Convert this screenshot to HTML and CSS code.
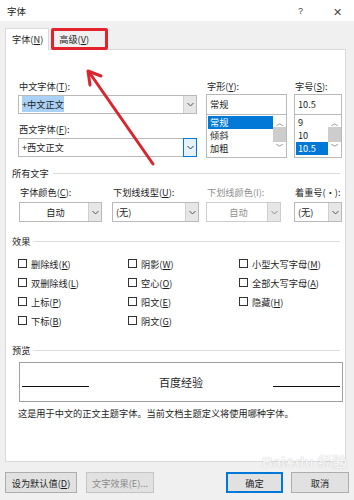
FILE: index.html
```html
<!DOCTYPE html>
<html lang="zh">
<head>
  <meta charset="UTF-8" />
  <title>字体</title>
  <link rel="stylesheet" href="styles.css">
</head>
<body>

  <div class="titlebar">
    <span class="title">字体</span>
    <span class="help">?</span>
    <span class="close">✕</span>
  </div>

  <div class="tabs">
    <div class="tab active">字体(<u>N</u>)</div>
    <div class="tab marked">高级(<u>V</u>)</div>
  </div>

  <div class="panel">
    <div class="fonts">
      <div class="col col-face">
        <div class="label">中文字体(<u>T</u>):</div>
        <div class="select">
          <span class="value"><span class="hl">+中文正文</span></span>
          <span class="drop"><svg width="7" height="5" viewBox="0 0 7 5"><polyline points="0.5,1 3.5,4 6.5,1" fill="none" stroke="#555" stroke-width="1"/></svg></span>
        </div>
        <div class="label gap">西文字体(<u>F</u>):</div>
        <div class="select">
          <span class="value">+西文正文</span>
          <span class="drop focus"><svg width="7" height="5" viewBox="0 0 7 5"><polyline points="0.5,1 3.5,4 6.5,1" fill="none" stroke="#333" stroke-width="1"/></svg></span>
        </div>
      </div>

      <div class="col col-style">
        <div class="label">字形(<u>Y</u>):</div>
        <div class="input">常规</div>
        <div class="list">
          <div class="items">
            <div class="item sel">常规</div>
            <div class="item">倾斜</div>
            <div class="item">加粗</div>
          </div>
          <div class="scroll">
            <span class="arr">︿</span>
            <span class="thumb"></span>
            <span class="arr">﹀</span>
          </div>
        </div>
      </div>

      <div class="col col-size">
        <div class="label">字号(<u>S</u>):</div>
        <div class="input">10.5</div>
        <div class="list">
          <div class="items">
            <div class="item">9</div>
            <div class="item">10</div>
            <div class="item sel">10.5</div>
          </div>
          <div class="scroll">
            <span class="arr">︿</span>
            <span class="thumb"></span>
            <span class="arr">﹀</span>
          </div>
        </div>
      </div>
    </div>

    <div class="heading"><span>所有文字</span></div>

    <div class="attrs">
      <div class="attr a-color">
        <div class="label">字体颜色(<u>C</u>):</div>
        <div class="select">
          <span class="value center">自动</span>
          <span class="drop"><svg width="7" height="5" viewBox="0 0 7 5"><polyline points="0.5,1 3.5,4 6.5,1" fill="none" stroke="#555" stroke-width="1"/></svg></span>
        </div>
      </div>
      <div class="attr a-line">
        <div class="label">下划线线型(<u>U</u>):</div>
        <div class="select">
          <span class="value">(无)</span>
          <span class="drop"><svg width="7" height="5" viewBox="0 0 7 5"><polyline points="0.5,1 3.5,4 6.5,1" fill="none" stroke="#555" stroke-width="1"/></svg></span>
        </div>
      </div>
      <div class="attr a-lcolor disabled">
        <div class="label">下划线颜色(I):</div>
        <div class="select">
          <span class="value center">自动</span>
          <span class="drop"><svg width="7" height="5" viewBox="0 0 7 5"><polyline points="0.5,1 3.5,4 6.5,1" fill="none" stroke="#888" stroke-width="1"/></svg></span>
        </div>
      </div>
      <div class="attr a-dot">
        <div class="label">着重号(·):</div>
        <div class="select">
          <span class="value">(无)</span>
          <span class="drop"><svg width="7" height="5" viewBox="0 0 7 5"><polyline points="0.5,1 3.5,4 6.5,1" fill="none" stroke="#555" stroke-width="1"/></svg></span>
        </div>
      </div>
    </div>

    <div class="heading h-effects"><span>效果</span></div>

    <div class="effects">
      <label class="check"><span class="box"></span>删除线(<u>K</u>)</label>
      <label class="check"><span class="box"></span>阴影(<u>W</u>)</label>
      <label class="check"><span class="box"></span>小型大写字母(<u>M</u>)</label>
      <label class="check"><span class="box"></span>双删除线(<u>L</u>)</label>
      <label class="check"><span class="box"></span>空心(<u>O</u>)</label>
      <label class="check"><span class="box"></span>全部大写字母(<u>A</u>)</label>
      <label class="check"><span class="box"></span>上标(<u>P</u>)</label>
      <label class="check"><span class="box"></span>阳文(<u>E</u>)</label>
      <label class="check"><span class="box"></span>隐藏(<u>H</u>)</label>
      <label class="check"><span class="box"></span>下标(<u>B</u>)</label>
      <label class="check"><span class="box"></span>阴文(<u>G</u>)</label>
    </div>

    <div class="heading h-preview"><span>预览</span></div>

    <div class="preview">
      <span class="rule"></span>
      <span class="sample">百度经验</span>
      <span class="rule"></span>
    </div>
    <p class="note">这是用于中文的正文主题字体。当前文档主题定义将使用哪种字体。</p>
  </div>

  <div class="buttons">
    <button class="b-default">设为默认值(<u>D</u>)</button>
    <button class="b-effects" disabled>文字效果(E)...</button>
    <span class="spacer"></span>
    <button class="b-ok">确定</button>
    <button class="b-cancel">取消</button>
  </div>

  <div class="watermark">Bai<span class="paw">❀</span>du 经验</div>

  <!-- annotation arrow -->
  <svg class="arrow" width="354" height="500" viewBox="0 0 354 500">
    <line x1="153" y1="164" x2="89" y2="72" stroke="#d9252d" stroke-width="3" stroke-linecap="round"/>
    <polyline points="90,85 88,71 101,76" fill="none" stroke="#d9252d" stroke-width="3" stroke-linecap="round" stroke-linejoin="round"/>
  </svg>

</body>
</html>
```

FILE: styles.css
```css
body {
  margin: 0;
  width: 354px;
  height: 500px;
  overflow: hidden;
  position: relative;
  background: #f0f0f0;
  color: #1e1e1e;
  font-family: "Noto Sans CJK SC", "Microsoft YaHei", sans-serif;
  font-size: 9.2px;
  line-height: 12px;
}
u {
  text-decoration: underline;
  text-underline-offset: 1px;
}
.titlebar {
  height: 21px;
  background: #fff;
  display: flex;
  align-items: center;
  padding: 0 12px 0 7px;
}
.title {
  flex: 1;
  font-size: 9.5px;
}
.help {
  font-family: "Liberation Sans", sans-serif;
  font-size: 9px;
  color: #444;
  margin-right: 30px;
}
.close {
  font-size: 11px;
  color: #444;
}
.tabs {
  height: 28px;
  display: flex;
  align-items: flex-end;
  padding-left: 5px;
}
.tab {
  height: 21px;
  line-height: 21px;
  box-sizing: border-box;
}
.tab.active {
  background: #fff;
  border: 1px solid #d9d9d9;
  border-bottom: none;
  height: 22px;
  margin-bottom: -1px;
  padding: 0 5px 0 6px;
  position: relative;
  z-index: 1;
}
.tab.marked {
  width: 57px;
  height: 22px;
  line-height: 16px;
  margin-left: 2px;
  margin-bottom: -1px;
  padding-left: 5px;
  border: 3px solid #e3222c;
  border-radius: 2px;
  background: #f0f0f0;
  position: relative;
  z-index: 2;
}
.panel {
  margin-left: 5px;
  width: 341px;
  height: 413px;
  box-sizing: border-box;
  background: #fff;
  border: 1px solid #d9d9d9;
}

/* font face row */
.fonts {
  display: flex;
  padding: 30px 0 0 12px;
}
.label {
  height: 12px;
  padding-left: 1px;
  white-space: nowrap;
}
.label.gap {
  margin-top: 9px;
}
.col-face {
  width: 179px;
  margin-right: 9px;
}
.col-style {
  width: 81px;
  margin-right: 7px;
}
.col-size {
  width: 48px;
}
.select {
  display: flex;
  height: 19px;
  margin-top: 3px;
  box-sizing: border-box;
  border: 1px solid #b9b9b9;
  background: #fff;
}
.select .value {
  flex: 1;
  padding-left: 3px;
  line-height: 17px;
  white-space: nowrap;
}
.select .value.center {
  text-align: center;
}
.hl {
  background: #a9d1f5;
  padding: 1px 0;
}
.drop {
  width: 12px;
  display: flex;
  align-items: center;
  justify-content: center;
  background: #e6e6e6;
  border-left: 1px solid #cfcfcf;
}
.drop.focus {
  background: #e5f1fb;
  border: 1px solid #0078d7;
  margin: -1px -1px -1px 0;
}
.input {
  height: 21px;
  margin-top: 2px;
  box-sizing: border-box;
  border: 1px solid #b9b9b9;
  padding-left: 3px;
  line-height: 19px;
}
.list {
  display: flex;
  height: 43px;
  box-sizing: border-box;
  border: 1px solid #b9b9b9;
  border-top: none;
}
.items {
  flex: 1;
  padding: 1px 0 0 1px;
}
.item {
  height: 13px;
  line-height: 13px;
  padding-left: 2px;
}
.item.sel {
  background: #0078d7;
  color: #fff;
}
.scroll {
  width: 13px;
  display: flex;
  flex-direction: column;
  align-items: center;
  font-size: 7px;
  line-height: 8px;
  color: #555;
  padding-top: 3px;
}
.thumb {
  width: 13px;
  height: 15px;
  margin: 1px 0;
  background: #cdcdcd;
}

/* section headings */
.heading {
  display: flex;
  align-items: center;
  margin: 9px 5px 0 6px;
  height: 12px;
}
.heading::after {
  content: "";
  flex: 1;
  height: 1px;
  background: #dcdcdc;
  margin-left: 4px;
}
.h-effects {
  margin-top: 13px;
}
.h-preview {
  margin-top: 14px;
}

/* all text row */
.attrs {
  display: flex;
  padding: 7px 0 0 13px;
}
.attrs .select {
  height: 20px;
  margin-top: 4px;
}
.attrs .select .value {
  line-height: 18px;
}
.a-color {
  width: 83px;
  margin-right: 10px;
}
.a-line {
  width: 87px;
  margin-right: 7px;
}
.a-lcolor {
  width: 75px;
  margin-right: 13px;
}
.a-dot {
  width: 48px;
}
.disabled .label,
.disabled .value {
  color: #8f8f8f;
}
.disabled .select {
  border-color: #cccccc;
}

/* effects */
.effects {
  display: grid;
  grid-template-columns: 110px 111px 100px;
  grid-auto-rows: 19px;
  padding: 7px 0 0 12px;
}
.check {
  display: flex;
  align-items: center;
  white-space: nowrap;
}
.box {
  width: 9px;
  height: 9px;
  box-sizing: border-box;
  border: 1px solid #333;
  margin-right: 4px;
}

/* preview */
.preview {
  display: flex;
  align-items: center;
  margin: 6px 0 0 13px;
  width: 324px;
  height: 40px;
  box-sizing: border-box;
  border: 1px solid #a0a0a0;
  padding: 0 2px;
}
.rule {
  width: 67px;
  height: 1px;
  background: #111;
  margin-top: 8px;
}
.sample {
  flex: 1;
  text-align: center;
  font-size: 11px;
}
.note {
  margin: 5px 0 0 12px;
  white-space: nowrap;
}

/* bottom buttons */
.buttons {
  display: flex;
  padding: 10px 5px 0 5px;
}
button {
  height: 21px;
  box-sizing: border-box;
  border: 1px solid #adadad;
  background: #e1e1e1;
  font-family: inherit;
  font-size: 9.2px;
  color: #1e1e1e;
  padding: 0;
}
.b-default {
  width: 72px;
}
.b-effects {
  width: 68px;
  margin-left: 9px;
  color: #8a8a8a;
  border-color: #c4c4c4;
}
.spacer {
  flex: 1;
}
.b-ok {
  width: 57px;
  border: 2px solid #0078d7;
}
.b-cancel {
  width: 58px;
  margin-left: 8px;
}
.watermark {
  position: absolute;
  left: 262px;
  top: 456px;
  font-family: "Liberation Sans", sans-serif;
  font-size: 15px;
  font-weight: bold;
  color: rgba(255, 255, 255, 0.85);
  text-shadow: 0 0 1px rgba(0, 0, 0, 0.25);
  pointer-events: none;
}
.paw {
  font-size: 12px;
}
.arrow {
  position: absolute;
  top: 0;
  left: 0;
  pointer-events: none;
}
```
